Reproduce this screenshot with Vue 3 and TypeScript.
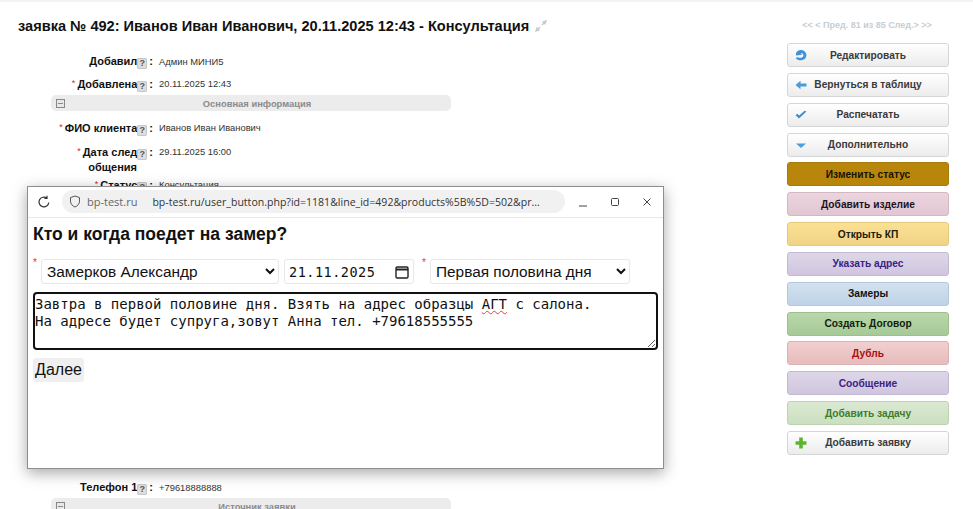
<script setup lang="ts">
interface Row { label: string; value: string; req?: boolean; extra?: string }
interface Btn { text: string; cls: string; icon?: string }

const topRows: Row[] = [
  { label: 'Добавил', value: 'Админ МИНИ5' },
  { label: 'Добавлена', value: '20.11.2025 12:43', req: true },
]
const mainRows: Row[] = [
  { label: 'ФИО клиента', value: 'Иванов Иван Иванович', req: true },
  { label: 'Дата след', extra: 'общения', value: '29.11.2025 16:00', req: true },
  { label: 'Статус', value: 'Консультация', req: true },
]
const buttons: Btn[] = [
  { text: 'Редактировать', cls: 'plain', icon: 'edit' },
  { text: 'Вернуться в таблицу', cls: 'plain', icon: 'back' },
  { text: 'Распечатать', cls: 'plain', icon: 'check' },
  { text: 'Дополнительно', cls: 'plain', icon: 'down' },
  { text: 'Изменить статус', cls: 'gold' },
  { text: 'Добавить изделие', cls: 'pink' },
  { text: 'Открыть КП', cls: 'yellow' },
  { text: 'Указать адрес', cls: 'violet' },
  { text: 'Замеры', cls: 'blue' },
  { text: 'Создать Договор', cls: 'green' },
  { text: 'Дубль', cls: 'red' },
  { text: 'Сообщение', cls: 'violet' },
  { text: 'Добавить задачу', cls: 'lime' },
  { text: 'Добавить заявку', cls: 'plain', icon: 'plus' },
]
</script>

<template>
  <div class="page">
    <main class="left">
      <h1 class="title">
        заявка № 492: Иванов Иван Иванович, 20.11.2025 12:43 - Консультация
        <svg class="pin" width="14" height="14" viewBox="0 0 14 14">
          <path d="M13 1 8 2.6 9.2 3.8 7.4 5.4 8.6 6.6 10.2 4.8 11.4 6Z" fill="#c9c9c9" />
          <path d="M1 13 6 11.4 4.8 10.2 6.6 8.6 5.4 7.4 3.8 9.2 2.6 8Z" fill="#c9c9c9" />
        </svg>
      </h1>

      <div v-for="r in topRows" :key="r.label" class="row">
        <div class="label">
          <span v-if="r.req" class="req">*</span>{{ r.label }}<span class="help">?</span><span class="colon">:</span>
        </div>
        <div class="value">{{ r.value }}</div>
      </div>

      <div class="bar">
        <span class="toggle"></span>
        <span class="bar-text">Основная информация</span>
      </div>

      <div v-for="r in mainRows" :key="r.label" class="row main-row">
        <div class="label">
          <span v-if="r.req" class="req">*</span>{{ r.label }}<span class="help">?</span><span class="colon">:</span>
          <div v-if="r.extra" class="extra">{{ r.extra }}</div>
        </div>
        <div class="value">{{ r.value }}</div>
      </div>

      <div class="hidden-part"></div>

      <div class="row">
        <div class="label">Телефон 1<span class="help">?</span><span class="colon">:</span></div>
        <div class="value">+79618888888</div>
      </div>
      <div class="bar low-bar">
        <span class="toggle"></span>
        <span class="bar-text">Источник заявки</span>
      </div>
    </main>

    <aside class="side">
      <div class="pager">&lt;&lt; &lt; Пред. 81 из 85 След.&gt; &gt;&gt;</div>
      <div class="btns">
        <div v-for="b in buttons" :key="b.text" class="btn" :class="b.cls">
          <svg v-if="b.icon" class="ico" width="14" height="14" viewBox="0 0 14 14">
            <template v-if="b.icon === 'edit'">
              <path d="M2 5.5C2.6 3 5 1.6 7.6 2 10.6 2.4 12.6 4.8 12.4 7.6 12.2 10.6 9.6 12.4 6.8 12.2 4.8 12.1 3 11.6 1.8 10.4L3.4 9C4.8 9.9 6.6 10.1 8 9.5 9.4 8.8 9.8 7.2 9 6 8.4 5.2 7.4 5 6.6 5.2L8 6.8 2 7.6Z" fill="#3f93dc" />
            </template>
            <template v-else-if="b.icon === 'back'">
              <path d="M1.5 7 6.5 2.8V5.4H12.5V8.6H6.5V11.2Z" fill="#4a9bdc" />
            </template>
            <template v-else-if="b.icon === 'check'">
              <path d="M1.5 7.2 5 10.6 12.5 3.6 10.6 2.8 5.2 7.4 3.4 5.8Z" fill="#3d8fd0" />
            </template>
            <template v-else-if="b.icon === 'down'">
              <path d="M2 5.5H12L7 10Z" fill="#4a9fdd" />
            </template>
            <template v-else-if="b.icon === 'plus'">
              <path d="M5.2 1.5H8.8V5.2H12.5V8.8H8.8V12.5H5.2V8.8H1.5V5.2H5.2Z" fill="#5db52f" />
            </template>
          </svg>
          <span class="btn-text">{{ b.text }}</span>
        </div>
      </div>
    </aside>

    <section class="popup">
      <header class="chrome">
        <svg class="reload" width="14" height="14" viewBox="0 0 14 14" fill="none" stroke="#333" stroke-width="1.2">
          <path d="M11.8 7.5A4.9 4.9 0 1 1 9.8 3" />
          <path d="M10 0.8V3.4H7.4" />
        </svg>
        <div class="omni">
          <svg width="12" height="13" viewBox="0 0 12 13" fill="none" stroke="#555" stroke-width="1">
            <path d="M6 1 10.5 2.6V6.2C10.5 9 8.5 11 6 12 3.5 11 1.5 9 1.5 6.2V2.6Z" />
          </svg>
          <span class="host">bp-test.ru</span>
          <span class="url">bp-test.ru/user_button.php?id=1181&amp;line_id=492&amp;products%5B%5D=502&amp;pr...</span>
        </div>
        <div class="winctl">
          <svg width="10" height="10" viewBox="0 0 10 10"><path d="M1 9H9" stroke="#444" stroke-width="1" /></svg>
          <svg width="10" height="10" viewBox="0 0 10 10" fill="none"><rect x="1.5" y="1.5" width="7" height="7" rx="1" stroke="#444" /></svg>
          <svg width="10" height="10" viewBox="0 0 10 10"><path d="M1.5 1.5 8.5 8.5M8.5 1.5 1.5 8.5" stroke="#444" /></svg>
        </div>
      </header>

      <div class="popup-body">
        <h2 class="question">Кто и когда поедет на замер?</h2>
        <div class="fields">
          <span class="star">*</span>
          <select class="ctl who">
            <option>Замерков Александр</option>
          </select>
          <div class="ctl date">
            <span>21.11.2025</span>
            <svg width="16" height="16" viewBox="0 0 16 16" fill="none" stroke="#222">
              <rect x="2" y="3" width="12" height="11" rx="1.2" stroke-width="1.4" />
              <path d="M2 5.5H14" stroke-width="2" />
            </svg>
          </div>
          <span class="star star2">*</span>
          <select class="ctl when">
            <option>Первая половина дня</option>
          </select>
        </div>
        <div class="note">Завтра в первой половине дня. Взять на адрес образцы <span class="typo">АГТ</span> с салона.<br />На адресе будет супруга,зовут Анна тел. +79618555555</div>
        <button class="next" type="button">Далее</button>
      </div>
    </section>
  </div>
</template>

<style>
html, body { margin: 0; overflow: hidden; background: #fff; }
</style>

<style scoped>
.page {
  position: relative;
  width: 973px;
  height: 509px;
  overflow: hidden;
  display: flex;
  background: #fff;
  border-top: 2px solid #f3f3f3;
  box-sizing: border-box;
  font-family: "Liberation Sans", Arial, sans-serif;
}
.left { width: 787px; flex: none; height: 600px; }
.title {
  margin: 14px 0 0 18px;
  font-size: 14.58px;
  line-height: 20px;
  font-weight: 700;
  color: #111;
  display: flex;
  align-items: center;
  gap: 5px;
}
.row {
  display: flex;
  align-items: flex-start;
  font-size: 11px;
  line-height: 15px;
  height: 22px;
  color: #222;
}
.title + .row { margin-top: 18px; }
.label {
  width: 153px;
  flex: none;
  text-align: right;
  font-weight: 700;
  color: #111;
}
.req { color: #d22; font-size: 9px; margin-right: 2px; vertical-align: 2px; font-weight: 400; }
.help {
  display: inline-block;
  width: 10px;
  height: 11px;
  line-height: 11px;
  margin: 0 1px 0 0;
  text-align: center;
  font-size: 9px;
  color: #555;
  background: #dedede;
  border-radius: 2px;
  box-shadow: inset 0 0 0 1px #c6c6c6;
  vertical-align: -1px;
}
.colon { margin-left: 1px; }
.extra { text-align: right; padding-right: 16px; line-height: 15px; }
.value { margin-left: 6px; font-size: 9.4px; color: #333; }
.bar {
  margin: -3px 0 0 51px;
  width: 400px;
  height: 16px;
  background: #ececec;
  border-radius: 5px;
  display: grid;
  align-items: center;
}
.toggle {
  grid-area: 1 / 1;
  justify-self: start;
  margin-left: 5px;
  width: 7px;
  height: 7px;
  border: 1px solid #888;
  background: linear-gradient(#888, #888) center / 5px 1px no-repeat, #e8e8e8;
}
.bar-text {
  grid-area: 1 / 1;
  text-align: center;
  padding-left: 12px;
  font-size: 9.4px;
  font-weight: 700;
  color: #8b8b8b;
}
.main-row { height: 24px; }
.bar + .main-row { margin-top: 9px; }
.main-row:has(.extra) { height: 33px; }
.hidden-part { height: 279px; }
.low-bar { margin-top: -4px; }
.side {
  width: 162px;
  flex: none;
  padding-top: 18px;
}
.pager {
  text-align: center;
  font-size: 9px;
  line-height: 10px;
  font-weight: 700;
  color: #c8cdd2;
  margin-left: -2px;
}
.btns {
  margin-top: 13px;
  display: flex;
  flex-direction: column;
  gap: 5.85px;
}
.btn {
  height: 24px;
  box-sizing: border-box;
  border: 1px solid #d8d8d8;
  border-radius: 3px;
  display: grid;
  align-items: center;
  font-size: 10.2px;
  font-weight: 700;
  color: #111;
}
.btn-text { grid-area: 1 / 1; text-align: center; }
.ico { grid-area: 1 / 1; justify-self: start; margin-left: 6px; }
.plain { background: linear-gradient(#fff, #ececec); color: #3a3a3a; border-color: #d6d6d6; }
.gold { background: #b8860b; border-color: #a87c0c; color: #1a1204; }
.pink { background: linear-gradient(#ebd5df, #e2c6d2); border-color: #d3b8c4; color: #1c1220; }
.yellow { background: linear-gradient(#fbe093, #f0d386); border-color: #e4c97f; color: #1e1a0c; }
.violet { background: linear-gradient(#ded6e8, #cfc6de); border-color: #c3bbd3; color: #3b2285; }
.blue { background: linear-gradient(#d2e1ef, #bfd3e6); border-color: #b3c7da; color: #111; }
.green { background: linear-gradient(#b9d7ab, #a6ca97); border-color: #9dbf8e; color: #12200c; }
.red { background: linear-gradient(#f2cfcf, #e6bcbc); border-color: #dcb2b2; color: #a80f0f; }
.lime { background: linear-gradient(#dbe9d2, #cbdfc0); border-color: #bcd2b2; color: #3f7d2b; }
.popup {
  position: absolute;
  left: 27px;
  top: 184px;
  width: 637px;
  height: 283px;
  box-sizing: border-box;
  background: #fff;
  border: 1px solid #8e8e8e;
  box-shadow: 0 4px 14px rgba(0, 0, 0, 0.35);
  display: flex;
  flex-direction: column;
  z-index: 2;
}
.chrome {
  height: 31px;
  flex: none;
  box-sizing: border-box;
  border-bottom: 1px solid #e8e8e8;
  padding-bottom: 1px;
  display: flex;
  align-items: center;
  padding-left: 9px;
}
.reload { flex: none; }
.omni {
  margin-left: 11px;
  width: 503px;
  height: 23px;
  border-radius: 12px;
  background: #f1f1f1;
  display: flex;
  align-items: center;
  padding-left: 7px;
  box-sizing: border-box;
  font-family: "Open Sans", "Noto Sans", sans-serif;
  font-size: 11px;
  color: #444;
}
.host { margin-left: 6px; color: #666; }
.url { margin-left: 15px; color: #333; white-space: nowrap; font-size: 10.55px; }
.winctl {
  display: flex;
  gap: 22px;
  margin-left: 13px;
  align-items: center;
}
.popup-body { padding: 5px; }
.question {
  margin: 0;
  font-size: 17.5px;
  line-height: 22px;
  font-weight: 700;
  color: #111;
}
.fields {
  margin-top: 14px;
  display: flex;
  align-items: flex-start;
  height: 26px;
}
.star { color: #e33; font-size: 10px; line-height: 10px; width: 8px; flex: none; margin-top: -1px; }
.star2 { margin-left: 8px; }
.ctl {
  height: 25px;
  box-sizing: border-box;
  border: 1px solid #e7e7e7;
  border-radius: 3px;
  background: #fff;
  font-family: "Liberation Sans", Arial, sans-serif;
  font-size: 15.4px;
  color: #111;
}
.who { width: 238px; margin-right: 5px; padding-left: 1px; }
.when { width: 200px; padding-left: 1px; }
.date {
  width: 130px;
  display: flex;
  align-items: center;
  justify-content: space-between;
  padding: 0 3px 0 4px;
  font-family: "DejaVu Sans Mono", monospace;
  font-size: 13.5px;
  letter-spacing: 0.5px;
}
.note {
  margin-top: 7px;
  width: 625px;
  height: 58px;
  box-sizing: border-box;
  border: 2px solid #111;
  border-radius: 4px;
  padding: 2px 0 0;
  font-family: "DejaVu Sans Mono", monospace;
  font-size: 14px;
  line-height: 17px;
  color: #111;
  resize: both;
  overflow: hidden;
  white-space: pre;
}
.typo { text-decoration: underline wavy #d44; text-decoration-thickness: 1px; }
.next {
  display: block;
  margin-top: 8px;
  width: 51px;
  height: 24px;
  padding: 0;
  border: none;
  border-radius: 3px;
  background: #efefef;
  font-family: "Liberation Sans", Arial, sans-serif;
  font-size: 16px;
  color: #111;
}
</style>
